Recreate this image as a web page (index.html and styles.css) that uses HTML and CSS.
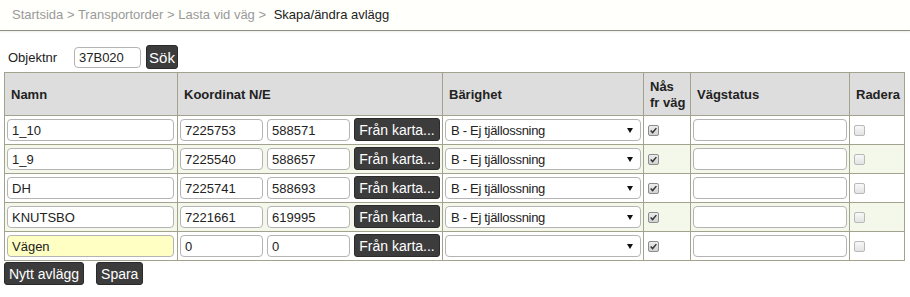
FILE: index.html
```html
<!DOCTYPE html>
<html lang="sv">
<head>
<meta charset="utf-8">
<title>Skapa/ändra avlägg</title>
<link rel="stylesheet" href="styles.css">
</head>
<body>
<div class="crumbs">
  <a class="crumb">Startsida</a> &gt; <a class="crumb">Transportorder</a> &gt; <a class="crumb">Lasta vid väg</a> &gt; <span class="current">Skapa/ändra avlägg</span>
</div>
<div class="search">
  <label class="search-label">Objektnr</label>
  <input class="field search-field" type="text" value="37B020">
  <button class="btn btn-search">Sök</button>
</div>
<table class="grid">
  <colgroup>
    <col class="c-name"><col class="c-coord"><col class="c-bar"><col class="c-nas"><col class="c-status"><col class="c-del">
  </colgroup>
  <thead>
    <tr>
      <th>Namn</th><th>Koordinat N/E</th><th>Bärighet</th><th class="th-nas">Nås<br>fr väg</th><th>Vägstatus</th><th>Radera</th>
    </tr>
  </thead>
  <tbody>
    <tr>
      <td><input class="field f-name" type="text" value="1_10"></td>
      <td><div class="coord"><input class="field f-num" type="text" value="7225753"><input class="field f-num" type="text" value="588571"><button class="btn btn-map">Från karta...</button></div></td>
      <td><div class="sel"><span class="sel-text">B - Ej tjällossning</span><svg class="sel-arrow" viewBox="0 0 6 5" width="6" height="5"><path d="M0 0 H6 L3 5 Z" fill="#111"/></svg></div></td>
      <td><span class="cb on"><svg viewBox="0 0 11 11" width="9" height="9"><path d="M2 5.6 L4.4 8 L9 2.6" fill="none" stroke="#333" stroke-width="1.8"/></svg></span></td>
      <td><input class="field f-status" type="text" value=""></td>
      <td><span class="cb"></span></td>
    </tr>
    <tr class="alt">
      <td><input class="field f-name" type="text" value="1_9"></td>
      <td><div class="coord"><input class="field f-num" type="text" value="7225540"><input class="field f-num" type="text" value="588657"><button class="btn btn-map">Från karta...</button></div></td>
      <td><div class="sel"><span class="sel-text">B - Ej tjällossning</span><svg class="sel-arrow" viewBox="0 0 6 5" width="6" height="5"><path d="M0 0 H6 L3 5 Z" fill="#111"/></svg></div></td>
      <td><span class="cb on"><svg viewBox="0 0 11 11" width="9" height="9"><path d="M2 5.6 L4.4 8 L9 2.6" fill="none" stroke="#333" stroke-width="1.8"/></svg></span></td>
      <td><input class="field f-status" type="text" value=""></td>
      <td><span class="cb"></span></td>
    </tr>
    <tr>
      <td><input class="field f-name" type="text" value="DH"></td>
      <td><div class="coord"><input class="field f-num" type="text" value="7225741"><input class="field f-num" type="text" value="588693"><button class="btn btn-map">Från karta...</button></div></td>
      <td><div class="sel"><span class="sel-text">B - Ej tjällossning</span><svg class="sel-arrow" viewBox="0 0 6 5" width="6" height="5"><path d="M0 0 H6 L3 5 Z" fill="#111"/></svg></div></td>
      <td><span class="cb on"><svg viewBox="0 0 11 11" width="9" height="9"><path d="M2 5.6 L4.4 8 L9 2.6" fill="none" stroke="#333" stroke-width="1.8"/></svg></span></td>
      <td><input class="field f-status" type="text" value=""></td>
      <td><span class="cb"></span></td>
    </tr>
    <tr class="alt">
      <td><input class="field f-name" type="text" value="KNUTSBO"></td>
      <td><div class="coord"><input class="field f-num" type="text" value="7221661"><input class="field f-num" type="text" value="619995"><button class="btn btn-map">Från karta...</button></div></td>
      <td><div class="sel"><span class="sel-text">B - Ej tjällossning</span><svg class="sel-arrow" viewBox="0 0 6 5" width="6" height="5"><path d="M0 0 H6 L3 5 Z" fill="#111"/></svg></div></td>
      <td><span class="cb on"><svg viewBox="0 0 11 11" width="9" height="9"><path d="M2 5.6 L4.4 8 L9 2.6" fill="none" stroke="#333" stroke-width="1.8"/></svg></span></td>
      <td><input class="field f-status" type="text" value=""></td>
      <td><span class="cb"></span></td>
    </tr>
    <tr>
      <td><input class="field f-name f-new" type="text" value="Vägen"></td>
      <td><div class="coord"><input class="field f-num" type="text" value="0"><input class="field f-num" type="text" value="0"><button class="btn btn-map">Från karta...</button></div></td>
      <td><div class="sel"><span class="sel-text"></span><svg class="sel-arrow" viewBox="0 0 6 5" width="6" height="5"><path d="M0 0 H6 L3 5 Z" fill="#111"/></svg></div></td>
      <td><span class="cb on"><svg viewBox="0 0 11 11" width="9" height="9"><path d="M2 5.6 L4.4 8 L9 2.6" fill="none" stroke="#333" stroke-width="1.8"/></svg></span></td>
      <td><input class="field f-status" type="text" value=""></td>
      <td><span class="cb"></span></td>
    </tr>
  </tbody>
</table>
<div class="actions">
  <button class="btn btn-action">Nytt avlägg</button>
  <button class="btn btn-action">Spara</button>
</div>
</body>
</html>
```
FILE: styles.css
```css
html, body {
  margin: 0;
  padding: 0;
  background: #ffffff;
  font-family: "Liberation Sans", Arial, sans-serif;
  font-size: 13px;
  color: #222;
}

.crumbs {
  height: 30px;
  line-height: 29px;
  padding-left: 12px;
  border-bottom: 1px solid #8f8f82;
  background: #fffffb;
  box-shadow: 0 1px 2px rgba(0, 0, 0, 0.08);
  color: #9a9a9a;
}
.crumb { color: #9a9a9a; text-decoration: none; }
.current { color: #222; margin-left: 4px; }

.search {
  display: flex;
  align-items: center;
  margin-top: 14px;
  padding-left: 8px;
  height: 24px;
}
.search-label { color: #222; width: 66px; }
.field {
  box-sizing: border-box;
  height: 22px;
  border: 1px solid #b4b4b4;
  border-radius: 4px;
  padding: 0 4px;
  font-family: "Liberation Sans", Arial, sans-serif;
  font-size: 13px;
  color: #222;
  background: #fff;
  margin: 0;
  outline: none;
}
.search-field { width: 67px; height: 21px; }

.btn {
  box-sizing: border-box;
  background: #3c3c3c;
  color: #fff;
  border: 1px solid #2a2a2a;
  border-radius: 3px;
  font-family: "Liberation Sans", Arial, sans-serif;
  font-size: 14px;
  padding: 0 4px;
  margin: 0;
  cursor: pointer;
}
.btn-search { height: 24px; width: 32px; margin-left: 5px; padding: 0; font-size: 15px; }

.grid {
  margin-top: 3px;
  margin-left: 4px;
  border-collapse: collapse;
  table-layout: fixed;
  width: 901px;
  border: 1px solid #a2a28e;
}
.c-name { width: 173px; }
.c-coord { width: 265px; }
.c-bar { width: 201px; }
.c-nas { width: 47px; }
.c-status { width: 159px; }
.c-del { width: 55px; }

.grid th {
  background: #dddddd;
  border: 1px solid #a2a28e;
  height: 41px;
  padding: 0 0 0 6px;
  text-align: left;
  vertical-align: middle;
  font-weight: bold;
  font-size: 13px;
  color: #222;
}
.grid th.th-nas { line-height: 16px; padding-top: 1px; }

.grid td {
  border: 1px solid #a2a28e;
  padding: 3px 2px;
  height: 22px;
  vertical-align: middle;
}
.grid tr.alt td { background: #f3f8ea; }

.f-name { width: 167px; display: block; }
.f-new { background: #ffffc4; }
.coord { display: flex; gap: 4px; align-items: center; }
.f-num { width: 83px; }
.btn-map { width: 86px; height: 23px; padding: 0; margin-top: -1px; }

.sel {
  box-sizing: border-box;
  width: 196px;
  height: 22px;
  border: 1px solid #b4b4b4;
  border-radius: 4px;
  background: #fff;
  display: flex;
  align-items: center;
  justify-content: space-between;
  padding: 0 7px 0 5px;
  font-size: 13px;
  letter-spacing: -0.3px;
  color: #222;
}
.sel-arrow { display: block; }

.cb {
  box-sizing: border-box;
  display: flex;
  align-items: center;
  justify-content: center;
  width: 11px;
  height: 11px;
  margin-left: 2px;
  margin-top: 1px;
  border: 1px solid #b9b9b9;
  border-radius: 2px;
  background: linear-gradient(#f8f8f8, #e3e3e3);
}
.cb.on { border-color: #8c8c8c; background: linear-gradient(#ececec, #d2d2d2); }

.f-status { width: 154px; display: block; }

.actions {
  display: flex;
  gap: 12px;
  margin-top: 1px;
  margin-left: 4px;
}
.btn-action { height: 23px; padding: 0 4px; }
```
